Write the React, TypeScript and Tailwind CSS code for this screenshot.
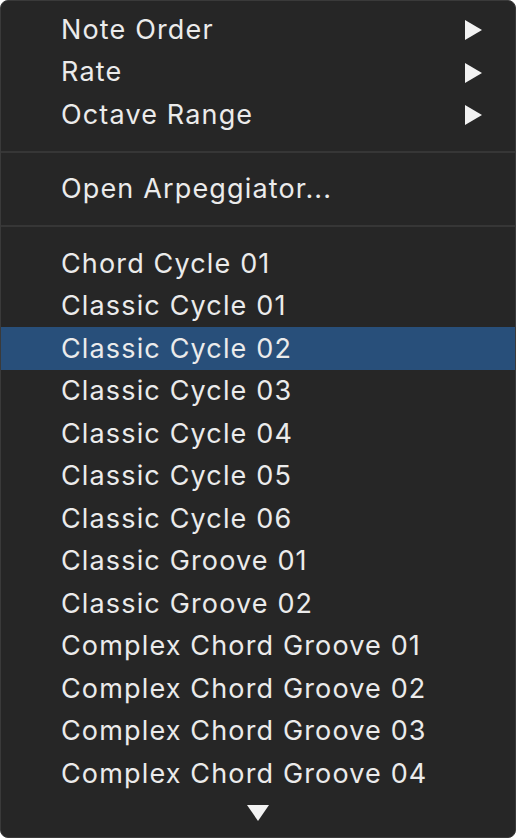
const submenus = ['Note Order', 'Rate', 'Octave Range'];

const presets = [
  'Chord Cycle 01',
  'Classic Cycle 01',
  'Classic Cycle 02',
  'Classic Cycle 03',
  'Classic Cycle 04',
  'Classic Cycle 05',
  'Classic Cycle 06',
  'Classic Groove 01',
  'Classic Groove 02',
  'Complex Chord Groove 01',
  'Complex Chord Groove 02',
  'Complex Chord Groove 03',
  'Complex Chord Groove 04',
];

const selected = 'Classic Cycle 02';

function Separator() {
  return (
    <div className="flex h-[32px] items-center">
      <div className="h-[2px] w-full bg-[#363636]" />
    </div>
  );
}

function Row({ label, active, submenu }: { label: string; active?: boolean; submenu?: boolean }) {
  return (
    <div
      className={
        'flex h-[42.5px] items-center justify-between pl-[60px] pr-[33px] ' +
        (active ? 'bg-[#284f7a]' : '')
      }
    >
      <span className="tracking-[1.15px]">{label}</span>
      {submenu && (
        <svg width="17" height="20" viewBox="0 0 17 20" className="mt-[2px]">
          <path d="M0 0 L17 10 L0 20 Z" fill="#f2f2f2" />
        </svg>
      )}
    </div>
  );
}

export default function App() {
  return (
    <div className="h-[838px] w-[516px] bg-white">
      <div
        className="flex h-full flex-col overflow-hidden rounded-[8px] border border-[#3a3a3a] bg-[#262626] pt-[7px] text-[27px] leading-none text-[#ebebeb]"
        style={{ fontFamily: 'Inter, "Noto Sans", sans-serif' }}
      >
        {/* submenus */}
        {submenus.map((s) => (
          <Row key={s} label={s} submenu />
        ))}

        <Separator />
        <Row label="Open Arpeggiator..." />
        <Separator />

        {/* preset list */}
        {presets.map((p) => (
          <Row key={p} label={p} active={p === selected} />
        ))}

        {/* scroll arrow */}
        <div className="flex justify-center pt-[10px]">
          <svg width="22" height="16" viewBox="0 0 22 16">
            <path d="M0 0 L22 0 L11 16 Z" fill="#f2f2f2" />
          </svg>
        </div>
      </div>
    </div>
  );
}
